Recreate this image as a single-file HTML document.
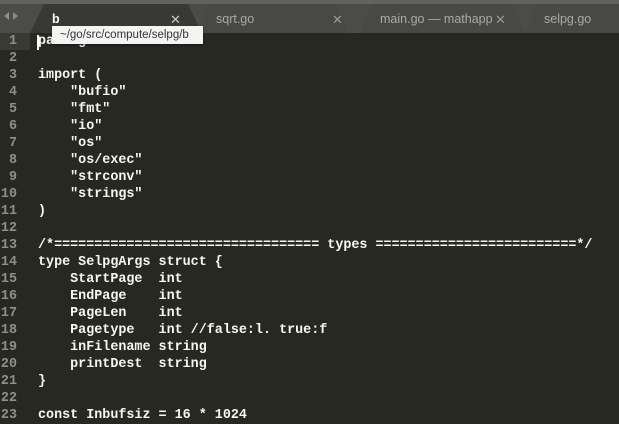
<!DOCTYPE html>
<html><head><style>
body{margin:0;width:619px;height:420px;overflow:hidden;background:#272822;font-family:"Liberation Sans",sans-serif;position:relative}
#bar{position:absolute;left:0;top:0;width:619px;height:33px;background:#4b4b47}
#bar .strip{position:absolute;left:0;top:0;width:619px;height:4px;background:#626260}
.tab{position:absolute;top:5px;height:29px;font-size:12.5px;color:#a9a9a5;line-height:29px}
.x{position:absolute;top:5px;font-size:13px;color:#9a9a96;line-height:29px}
#code{position:absolute;left:0;top:33px;width:619px;font-family:"Liberation Mono",monospace;font-size:13.4px;font-weight:bold;color:#f8f8f2}
.l{height:17px;line-height:17px;white-space:pre;position:relative}
.n{position:absolute;left:0;width:17px;text-align:right;color:#8f908a;font-weight:bold}
.t{position:absolute;left:38px}
#tip{position:absolute;left:52px;top:26px;width:151px;height:18px;background:#f4f4f4;color:#333;font-size:11.5px;line-height:18px;padding-left:8px;box-sizing:border-box;box-shadow:0 1px 2px rgba(0,0,0,.4)}
</style></head><body>
<div id="bar"><div class="strip"></div>
<svg width="619" height="33" style="position:absolute;left:0;top:0">
<polygon points="30,33 44,4 188,4 202,33" fill="#383834"/>
<polygon points="197,33 209,4 336,4 348,33" fill="#484844"/>
<polygon points="360,33 372,4 513,4 525,33" fill="#484844"/>
<polygon points="525,33 537,4 619,4 619,33" fill="#484844"/>
<polygon points="4,16 9,12 9,20" fill="#8a8a86"/><polygon points="13,12 18,16 13,20" fill="#8a8a86"/>
</svg>
<div class="tab" style="left:52px;color:#fff;font-weight:bold">b</div>
<div class="x" style="left:170px;color:#c8c8c4">✕</div>
<div class="tab" style="left:216px">sqrt.go</div>
<div class="x" style="left:332px">✕</div>
<div class="tab" style="left:380px">main.go — mathapp</div>
<div class="x" style="left:495px">✕</div>
<div class="tab" style="left:544px">selpg.go</div>
</div>
<div style="position:absolute;left:0;top:33px;width:30px;height:17px;background:#3a3a34"></div>
<div id="code">
<div class="l"><span class="n">1</span><span class="t">package main</span></div>
<div class="l"><span class="n">2</span></div>
<div class="l"><span class="n">3</span><span class="t">import (</span></div>
<div class="l"><span class="n">4</span><span class="t">    "bufio"</span></div>
<div class="l"><span class="n">5</span><span class="t">    "fmt"</span></div>
<div class="l"><span class="n">6</span><span class="t">    "io"</span></div>
<div class="l"><span class="n">7</span><span class="t">    "os"</span></div>
<div class="l"><span class="n">8</span><span class="t">    "os/exec"</span></div>
<div class="l"><span class="n">9</span><span class="t">    "strconv"</span></div>
<div class="l"><span class="n">10</span><span class="t">    "strings"</span></div>
<div class="l"><span class="n">11</span><span class="t">)</span></div>
<div class="l"><span class="n">12</span></div>
<div class="l"><span class="n">13</span><span class="t">/*================================= types =========================*/</span></div>
<div class="l"><span class="n">14</span><span class="t">type SelpgArgs struct {</span></div>
<div class="l"><span class="n">15</span><span class="t">    StartPage  int</span></div>
<div class="l"><span class="n">16</span><span class="t">    EndPage    int</span></div>
<div class="l"><span class="n">17</span><span class="t">    PageLen    int</span></div>
<div class="l"><span class="n">18</span><span class="t">    Pagetype   int //false:l. true:f</span></div>
<div class="l"><span class="n">19</span><span class="t">    inFilename string</span></div>
<div class="l"><span class="n">20</span><span class="t">    printDest  string</span></div>
<div class="l"><span class="n">21</span><span class="t">}</span></div>
<div class="l"><span class="n">22</span></div>
<div class="l"><span class="n">23</span><span class="t">const Inbufsiz = 16 * 1024</span></div>
</div>
<div style="position:absolute;left:37px;top:35px;width:2px;height:15px;background:#fff"></div>
<div id="tip">~/go/src/compute/selpg/b</div>
</body></html>
